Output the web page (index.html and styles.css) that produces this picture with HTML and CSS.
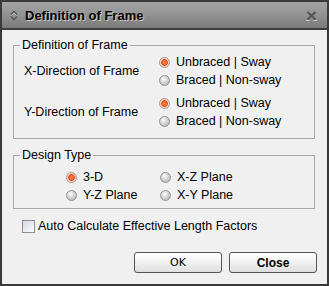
FILE: index.html
```html
<!DOCTYPE html>
<html>
<head>
<meta charset="utf-8">
<link rel="stylesheet" href="styles.css">
</head>
<body>
<div class="window">
  <div class="titlebar">
    <svg class="ticon" width="8" height="11" viewBox="0 0 8 11">
      <polyline points="1,4.5 4,1.5 7,4.5" fill="none" stroke="#5a5a5a" stroke-width="1.6"/>
      <polyline points="1,6.5 4,9.5 7,6.5" fill="none" stroke="#5a5a5a" stroke-width="1.6"/>
      <polyline points="1.5,5.5 4,3 6.5,5.5" fill="none" stroke="#c8c8c8" stroke-width="0.8"/>
    </svg>
    <span class="title">Definition of Frame</span>
    <svg class="close" width="11" height="10" viewBox="0 0 11 10">
      <line x1="1.5" y1="1" x2="9.5" y2="8.5" stroke="#555" stroke-width="2"/>
      <line x1="9.5" y1="1" x2="1.5" y2="8.5" stroke="#555" stroke-width="2"/>
      <line x1="0" y1="9.6" x2="3.5" y2="9.6" stroke="#e8e8e8" stroke-width="0.8"/>
      <line x1="7.5" y1="9.6" x2="11" y2="9.6" stroke="#e8e8e8" stroke-width="0.8"/>
    </svg>
  </div>
  <div class="body">
    <fieldset class="group g1">
      <legend>Definition of Frame</legend>
      <div class="dir">
        <span class="dir-label">X-Direction of Frame</span>
        <div class="opts">
          <div class="radio"><span class="rb on"></span>Unbraced | Sway</div>
          <div class="radio"><span class="rb"></span>Braced | Non-sway</div>
        </div>
      </div>
      <div class="dir second">
        <span class="dir-label">Y-Direction of Frame</span>
        <div class="opts">
          <div class="radio"><span class="rb on"></span>Unbraced | Sway</div>
          <div class="radio"><span class="rb"></span>Braced | Non-sway</div>
        </div>
      </div>
    </fieldset>
    <fieldset class="group g2">
      <legend>Design Type</legend>
      <div class="types">
        <div class="radio"><span class="rb on"></span>3-D</div>
        <div class="radio"><span class="rb"></span>X-Z Plane</div>
        <div class="radio"><span class="rb"></span>Y-Z Plane</div>
        <div class="radio"><span class="rb"></span>X-Y Plane</div>
      </div>
    </fieldset>
    <div class="check"><span class="cb"></span>Auto Calculate Effective Length Factors</div>
    <div class="buttons">
      <button class="btn">OK</button>
      <button class="btn bold">Close</button>
    </div>
  </div>
</div>
</body>
</html>
```
FILE: styles.css
```css
html, body {
  margin: 0;
  padding: 0;
  background: #f0f0f0;
}
.window {
  width: 329px;
  height: 286px;
  box-sizing: border-box;
  border: 2px solid #3a3a3a;
  background: #f0f0f0;
  font-family: "Liberation Sans", Arial, sans-serif;
  font-size: 12.5px;
  color: #000;
}
.titlebar {
  height: 26px;
  border-bottom: 2px solid #3e3e3e;
  background: linear-gradient(#a3a3a3 0%, #989898 35%, #8b8b8b 65%, #7a7a7a 100%);
  display: flex;
  align-items: center;
  padding-left: 8px;
}
.ticon {
  display: block;
  margin-top: 1px;
}
.title {
  margin-left: 7px;
  font-weight: bold;
  font-size: 13px;
  text-shadow: 1px 1px 0 rgba(255,255,255,0.55);
}
.close {
  display: block;
  margin-left: auto;
  margin-right: 10px;
  margin-top: 2px;
}
.body {
  padding: 8px 12px 0 11px;
}
.group {
  margin: 0;
  min-width: 0;
  border: 1px solid #a8a8a8;
  padding: 0 0 8px 6px;
}
.group legend {
  padding: 0 2px;
  line-height: 15px;
}
.dir {
  display: grid;
  grid-template-columns: 139px 1fr;
}
.dir.second {
  margin-top: 5px;
}
.dir-label {
  align-self: center;
  padding-left: 4px;
}
.radio {
  height: 18px;
  display: flex;
  align-items: center;
  white-space: nowrap;
}
.rb {
  width: 11px;
  height: 11px;
  box-sizing: border-box;
  border-radius: 50%;
  border: 1px solid #929292;
  background: radial-gradient(circle at 40% 35%, #ffffff 0, #d8d8d8 40%, #acacac 100%);
  margin-right: 6px;
  flex: none;
}
.rb.on {
  border-color: #b89080;
  background: radial-gradient(circle at 50% 50%, #ff8a4a 0, #f2622a 2.2px, #d84818 3px, #f0cfc2 3.6px, #ffffff 100%);
}
.g2 {
  margin-top: 9px;
  padding-bottom: 4px;
}
.types {
  display: grid;
  grid-template-columns: 94px 1fr;
  padding-left: 46px;
  padding-top: 5px;
}
.check {
  display: flex;
  align-items: center;
  height: 16px;
  margin-top: 9px;
  margin-left: 9px;
}
.cb {
  width: 13px;
  height: 13px;
  box-sizing: border-box;
  border: 1px solid #8e8f8f;
  background: linear-gradient(135deg, #d3d9e6 0%, #eceff5 60%, #ffffff 100%);
  margin-right: 3px;
  flex: none;
}
.buttons {
  display: flex;
  justify-content: flex-end;
  gap: 7px;
  margin-top: 18px;
  margin-right: -2px;
}
.btn {
  width: 88px;
  height: 21px;
  box-sizing: border-box;
  border: 1px solid #555;
  border-radius: 3px;
  background: linear-gradient(#ffffff 0%, #f3f3f3 45%, #dedede 100%);
  font-family: "DejaVu Sans", "Liberation Sans", sans-serif;
  font-size: 11px;
  color: #000;
  padding: 0;
}
.btn.bold {
  font-family: "Liberation Sans", Arial, sans-serif;
  font-weight: bold;
  font-size: 12px;
}
```
